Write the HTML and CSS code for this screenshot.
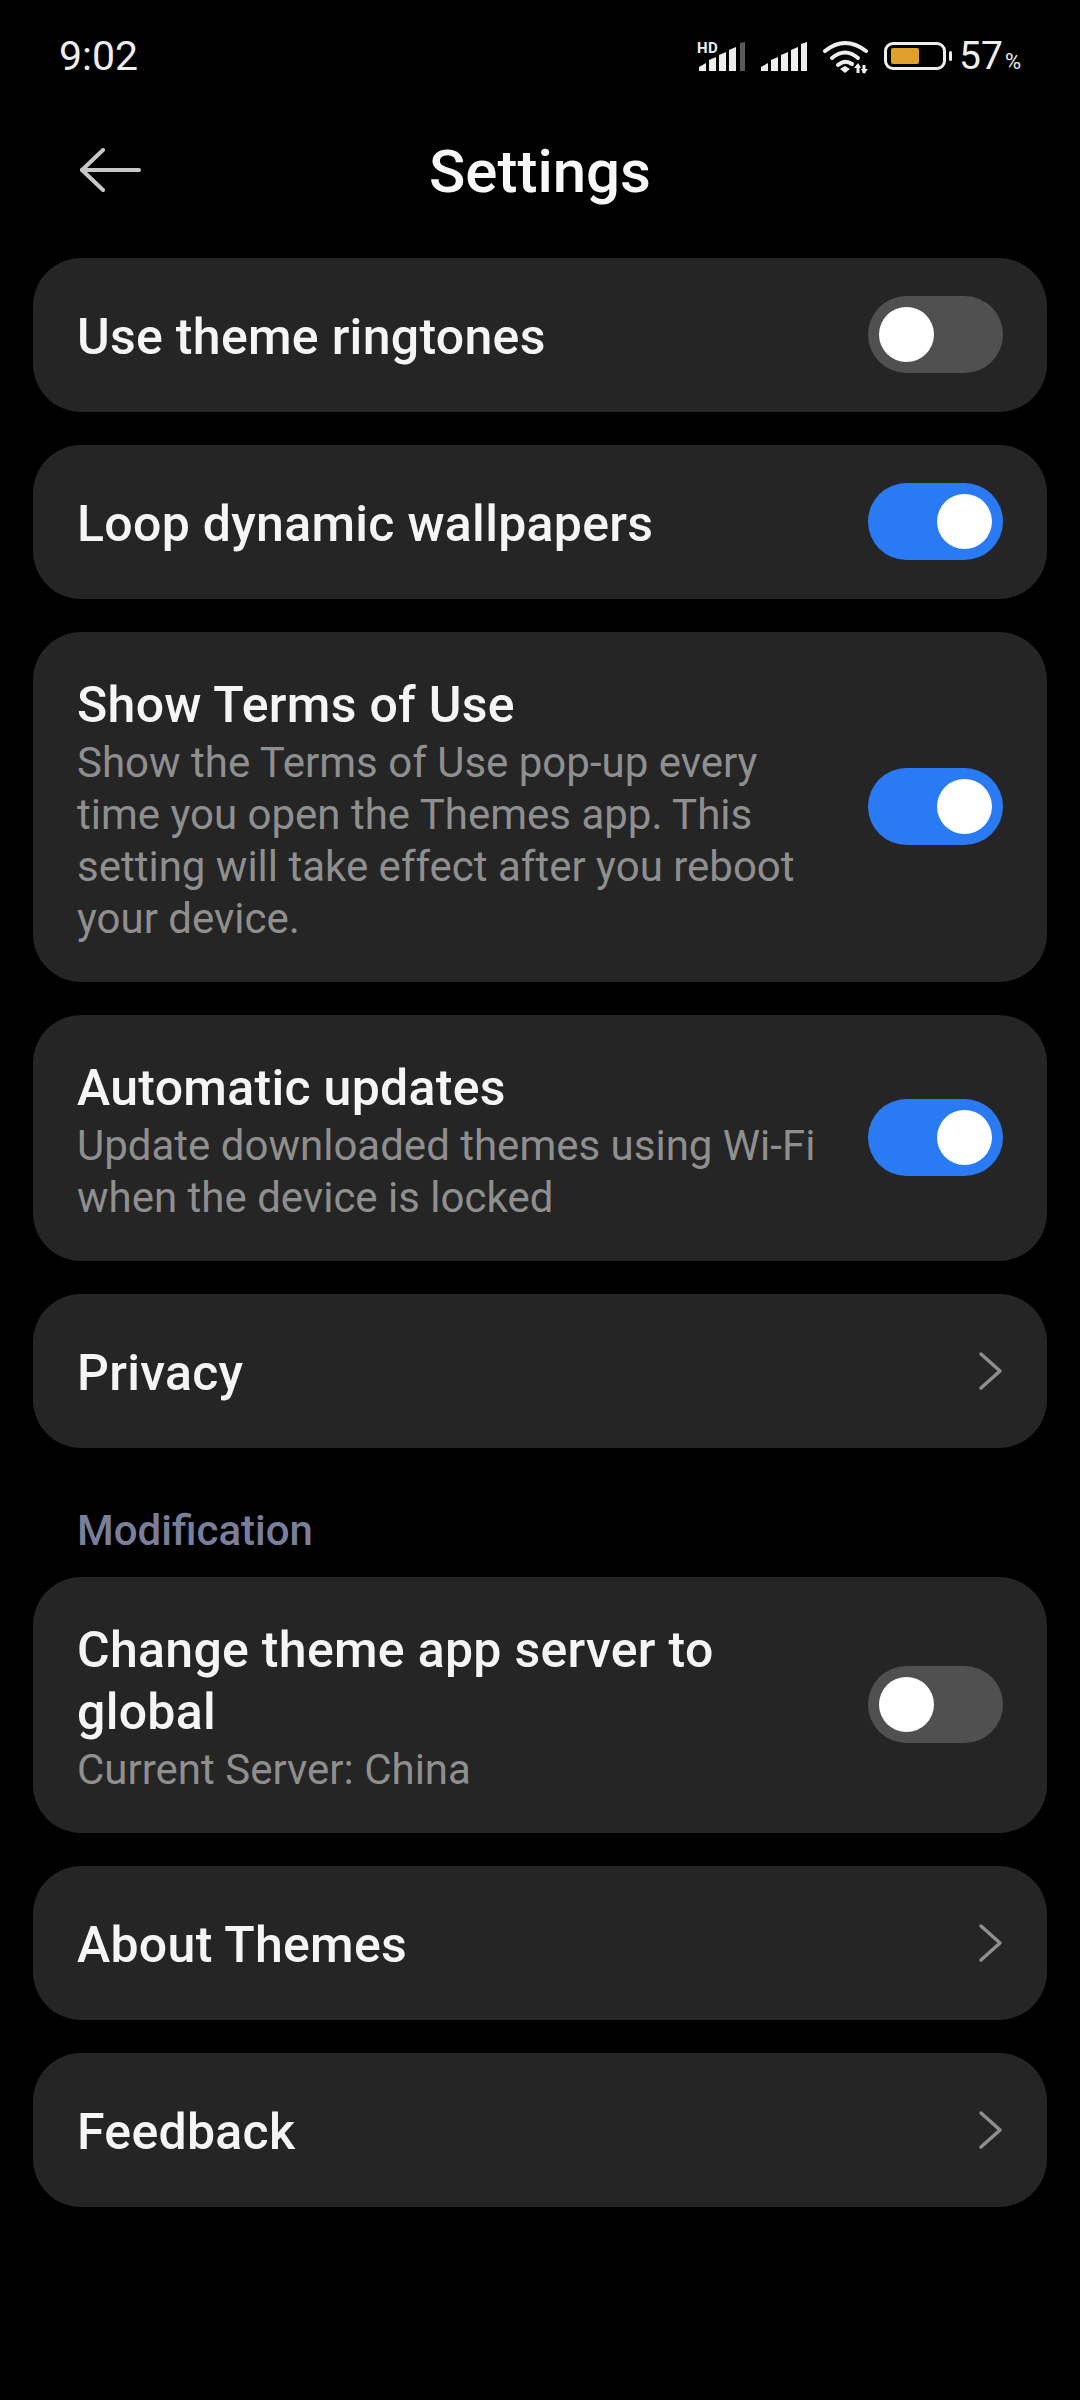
FILE: index.html
```html
<!DOCTYPE html>
<html lang="en">
<head>
    <meta charset="UTF-8">
    <meta name="viewport" content="width=device-width, initial-scale=1.0">
    <title>Settings</title>
    <link rel="stylesheet" href="styles.css">
</head>
<body>
    <div class="status-bar">
        <span class="clock">9:02</span>
        <div class="status-icons">
            <div class="signal-wrap">
                <span class="hd">HD</span>
                <svg class="signal" width="48" height="32" viewBox="0 0 48 32" fill="#eee">
                    <path d="M0 29v-4l7-4v8z"/>
                    <path d="M10 29V18l7-3v14z"/>
                    <path d="M20 29V13l7-3v19z"/>
                    <path d="M30 29V8l7-3v24z"/>
                    <path d="M41 29V1l5-1v29z" fill="#5a5a5a"/>
                </svg>
            </div>
            <svg class="signal" width="48" height="32" viewBox="0 0 48 32" fill="#eee">
                <path d="M0 29v-4l7-4v8z"/>
                <path d="M10 29V18l7-3v14z"/>
                <path d="M20 29V13l7-3v19z"/>
                <path d="M30 29V8l7-3v24z"/>
                <path d="M40 29V2l6-2v29z"/>
            </svg>
            <svg class="wifi" width="48" height="34" viewBox="0 0 48 34" fill="none" stroke="#eee" stroke-width="4" stroke-linecap="round">
                <path d="M3 11Q23-5 44 11"/>
                <path d="M10 18Q23 7 36 18"/>
                <path d="M16 25Q23 19 30 24"/>
                <path d="M18 29l5-3 5 3-5 4z" fill="#eee" stroke="none"/>
                <path d="M36 25v8M42 33v-8" stroke-width="3" stroke-linecap="butt"/>
                <path d="M32 28l4-5 3 5zM39 29l3 5 4-5z" fill="#eee" stroke="none"/>
            </svg>
            <div class="battery">
                <div class="battery-body"><div class="battery-fill"></div></div>
                <div class="battery-nub"></div>
            </div>
            <span class="battery-text">57<small>%</small></span>
        </div>
    </div>

    <div class="header">
        <svg class="back" width="62" height="44" viewBox="0 0 62 44" fill="none" stroke="#c8c8c8" stroke-width="4" stroke-linecap="round" stroke-linejoin="round">
            <path d="M24 2L3 22l21 20"/>
            <path d="M3 22h57"/>
        </svg>
        <h1>Settings</h1>
    </div>

    <div class="list">
        <div class="card">
            <div class="card-text"><div class="title">Use theme ringtones</div></div>
            <div class="toggle"><div class="knob"></div></div>
        </div>
        <div class="card">
            <div class="card-text"><div class="title">Loop dynamic wallpapers</div></div>
            <div class="toggle on"><div class="knob"></div></div>
        </div>
        <div class="card">
            <div class="card-text">
                <div class="title">Show Terms of Use</div>
                <div class="desc">Show the Terms of Use pop-up every time you open the Themes app. This setting will take effect after you reboot your device.</div>
            </div>
            <div class="toggle on"><div class="knob"></div></div>
        </div>
        <div class="card">
            <div class="card-text">
                <div class="title">Automatic updates</div>
                <div class="desc">Update downloaded themes using Wi-Fi when the device is locked</div>
            </div>
            <div class="toggle on"><div class="knob"></div></div>
        </div>
        <div class="card">
            <div class="card-text"><div class="title">Privacy</div></div>
            <svg class="chevron" width="26" height="40" viewBox="0 0 26 40" fill="none" stroke="#8e8e8e" stroke-width="3.5" stroke-linecap="round" stroke-linejoin="round">
                <path d="M4 3l19 17L4 37"/>
            </svg>
        </div>

        <div class="section-label">Modification</div>

        <div class="card">
            <div class="card-text">
                <div class="title">Change theme app server to global</div>
                <div class="desc">Current Server: China</div>
            </div>
            <div class="toggle"><div class="knob"></div></div>
        </div>
        <div class="card">
            <div class="card-text"><div class="title">About Themes</div></div>
            <svg class="chevron" width="26" height="40" viewBox="0 0 26 40" fill="none" stroke="#8e8e8e" stroke-width="3.5" stroke-linecap="round" stroke-linejoin="round">
                <path d="M4 3l19 17L4 37"/>
            </svg>
        </div>
        <div class="card">
            <div class="card-text"><div class="title">Feedback</div></div>
            <svg class="chevron" width="26" height="40" viewBox="0 0 26 40" fill="none" stroke="#8e8e8e" stroke-width="3.5" stroke-linecap="round" stroke-linejoin="round">
                <path d="M4 3l19 17L4 37"/>
            </svg>
        </div>
    </div>
</body>
</html>
```

FILE: styles.css
```css
body {
    margin: 0;
    width: 1080px;
    min-height: 2400px;
    background: #000;
    color: #f5f5f5;
    font-family: Roboto, "Noto Sans", sans-serif;
}

.status-bar {
    height: 110px;
    box-sizing: border-box;
    padding: 34px 59px 0 59px;
    display: flex;
    justify-content: space-between;
    align-items: flex-start;
}
.clock {
    font-size: 41px;
    line-height: 44px;
    color: #eee;
}
.status-icons {
    display: flex;
    align-items: flex-start;
    margin-top: 6px;
}
.signal-wrap {
    position: relative;
    margin-right: 14px;
}
.hd {
    position: absolute;
    left: -2px;
    top: 1px;
    font-size: 15px;
    line-height: 14px;
    font-weight: 700;
    letter-spacing: 0.5px;
    color: #eee;
}
.signal {
    display: block;
    margin-top: 2px;
}
.wifi {
    display: block;
    margin: 0 14px 0 13px;
}
.battery {
    display: flex;
    align-items: center;
    height: 28px;
    margin-top: 2px;
}
.battery-body {
    width: 62px;
    height: 28px;
    box-sizing: border-box;
    border: 3px solid #eee;
    border-radius: 9px;
    padding: 3px 4px;
}
.battery-fill {
    width: 28px;
    height: 16px;
    background: #e09f2a;
    border-radius: 2px;
}
.battery-nub {
    width: 3px;
    height: 10px;
    margin-left: 3px;
    background: #eee;
    border-radius: 2px;
}
.battery-text {
    font-size: 39px;
    line-height: 32px;
    margin-left: 7px;
    color: #eee;
}
.battery-text small {
    font-size: 22px;
    margin-left: 2px;
}

.header {
    height: 148px;
    display: flex;
    align-items: center;
    justify-content: center;
    position: relative;
}
.back {
    position: absolute;
    left: 79px;
    top: 38px;
}
h1 {
    margin: 0 0 26px;
    font-size: 60px;
    font-weight: 500;
    color: #f8f8f8;
}

.list {
    padding: 0 33px;
    display: flex;
    flex-direction: column;
    gap: 33px;
}
.card {
    min-height: 154px;
    box-sizing: border-box;
    padding: 0 44px;
    background: #252525;
    border-radius: 48px;
    display: flex;
    align-items: center;
}
.card-text {
    flex: 1;
    padding: 42px 34px 38px 0;
}
.title {
    font-size: 50px;
    line-height: 62px;
    font-weight: 500;
    color: #f5f5f5;
    letter-spacing: 0.3px;
}
.desc {
    margin-top: 1px;
    margin-bottom: -1px;
    font-size: 42px;
    line-height: 52px;
    color: #8f8f8f;
}

.toggle {
    width: 135px;
    height: 77px;
    flex-shrink: 0;
    box-sizing: border-box;
    margin-top: -1px;
    padding: 11px;
    border-radius: 39px;
    background: #505050;
    display: flex;
}
.toggle.on {
    background: #2a7af3;
    justify-content: flex-end;
}
.knob {
    width: 55px;
    height: 55px;
    border-radius: 50%;
    background: #fff;
}
.chevron {
    flex-shrink: 0;
}

.section-label {
    margin: 22px 44px -15px;
    font-size: 42px;
    line-height: 56px;
    font-weight: 500;
    color: #7b7e9b;
}
```
